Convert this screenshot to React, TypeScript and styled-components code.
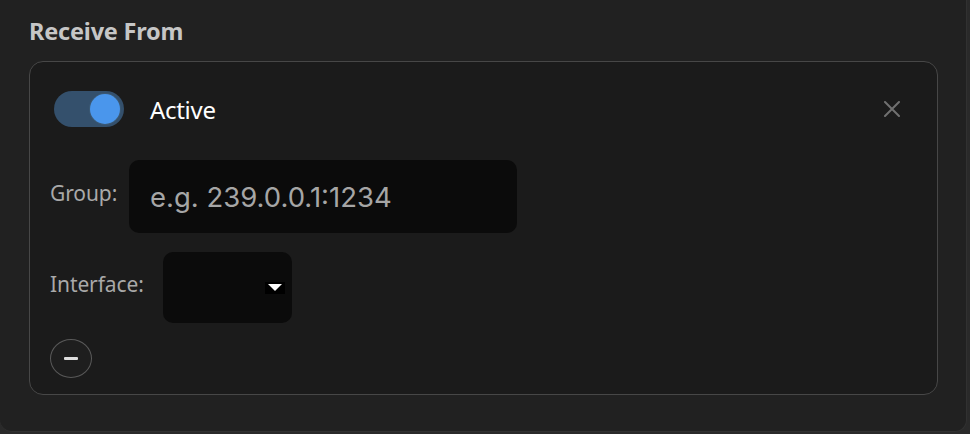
import styled, { createGlobalStyle } from 'styled-components';

const GlobalStyle = createGlobalStyle`
	html, body {
		margin: 0;
		padding: 0;
		background-color: #2a2a2a;
	}
	body {
		font-family: 'Noto Sans', 'DejaVu Sans', sans-serif;
		-webkit-font-smoothing: antialiased;
	}
`;

const Panel = styled.section`
	box-sizing: border-box;
	width: 967px;
	height: 432px;
	padding: 17px 0 0 29px;
	background-color: #212121;
	border: 1px solid #313131;
	border-top: none;
	border-left: none;
	border-radius: 0 0 12px 12px;
`;

const Title = styled.h2`
	margin: 0 0 16px;
	font-size: 23.5px;
	line-height: 28px;
	font-weight: 700;
	color: #c6c6c6;
	letter-spacing: -0.2px;
`;

const Card = styled.div`
	box-sizing: border-box;
	width: 909px;
	height: 334px;
	padding: 29px 37px 0 20px;
	background-color: #1b1b1b;
	border: 1.5px solid #474747;
	border-radius: 14px;
	display: flex;
	flex-direction: column;
`;

const HeaderRow = styled.div`
	display: flex;
	align-items: center;
	height: 36px;
	padding-left: 4px;
`;

const Toggle = styled.button<{ $on: boolean }>`
	box-sizing: border-box;
	width: 70px;
	height: 36px;
	padding: 0 4px;
	border: none;
	border-radius: 18px;
	background-color: ${(p) => (p.$on ? '#34506c' : '#3a3a3a')};
	display: flex;
	align-items: center;
	justify-content: ${(p) => (p.$on ? 'flex-end' : 'flex-start')};
	cursor: pointer;
`;

const Knob = styled.span`
	width: 30px;
	height: 30px;
	border-radius: 50%;
	background-color: #4a96ec;
	box-shadow: 0 0 0 1px #3b5975;
`;

const ActiveLabel = styled.span`
	margin-left: 26px;
	font-size: 24px;
	color: #ffffff;
	letter-spacing: -0.3px;
`;

const CloseButton = styled.button`
	margin-left: auto;
	width: 16px;
	height: 16px;
	padding: 0;
	border: none;
	background: none;
	display: flex;
	cursor: pointer;
`;

const FieldRow = styled.div<{ $top: number }>`
	display: flex;
	align-items: center;
	margin-top: ${(p) => p.$top}px;
`;

const FieldLabel = styled.label<{ $width: number }>`
	width: ${(p) => p.$width}px;
	margin-bottom: 8px;
	font-size: 21px;
	color: #a9a9a9;
	letter-spacing: -0.1px;
	white-space: nowrap;
`;

const TextInput = styled.input`
	box-sizing: border-box;
	width: 388px;
	height: 73px;
	padding: 0 21px;
	border: none;
	border-radius: 10px;
	background-color: #0b0b0b;
	font-family: 'Inter', 'Liberation Sans', sans-serif;
	font-size: 27.5px;
	color: #eeeeee;
	outline: none;

	&::placeholder {
		color: #a6a6a6;
	}
`;

const SelectBox = styled.div`
	box-sizing: border-box;
	width: 129px;
	height: 71px;
	padding-right: 7px;
	border-radius: 10px;
	background-color: #0b0b0b;
	display: flex;
	align-items: center;
	justify-content: flex-end;
`;

const RemoveButton = styled.button`
	box-sizing: border-box;
	margin-top: 16px;
	width: 42px;
	height: 39px;
	padding: 0;
	border: 1.5px solid #595959;
	border-radius: 50%;
	background-color: #1e1e1e;
	display: flex;
	align-items: center;
	justify-content: center;
	cursor: pointer;
`;

const MinusBar = styled.span`
	width: 14px;
	height: 3px;
	border-radius: 1px;
	background-color: #dddddd;
`;

const App = () => {
	return (
		<>
			<GlobalStyle />
			<Panel>
				<Title>Receive From</Title>
				<Card>
					<HeaderRow>
						<Toggle $on aria-label="Active">
							<Knob />
						</Toggle>
						<ActiveLabel>Active</ActiveLabel>
						<CloseButton aria-label="Close">
							<svg width="16" height="16" viewBox="0 0 16 16">
								<path d="M1 1 L15 15 M15 1 L1 15" stroke="#707070" strokeWidth="2" strokeLinecap="round" />
							</svg>
						</CloseButton>
					</HeaderRow>

					<FieldRow $top={33}>
						<FieldLabel $width={79}>Group:</FieldLabel>
						<TextInput placeholder="e.g. 239.0.0.1:1234" />
					</FieldRow>

					<FieldRow $top={19}>
						<FieldLabel $width={113}>Interface:</FieldLabel>
						<SelectBox>
							<svg width="20" height="12" viewBox="0 0 20 12">
								<rect width="20" height="12" fill="#000" />
								<path d="M3 2 L17 2 L10 9 Z" fill="#fff" />
							</svg>
						</SelectBox>
					</FieldRow>

					<RemoveButton aria-label="Remove">
						<MinusBar />
					</RemoveButton>
				</Card>
			</Panel>
		</>
	);
};

export default App;
